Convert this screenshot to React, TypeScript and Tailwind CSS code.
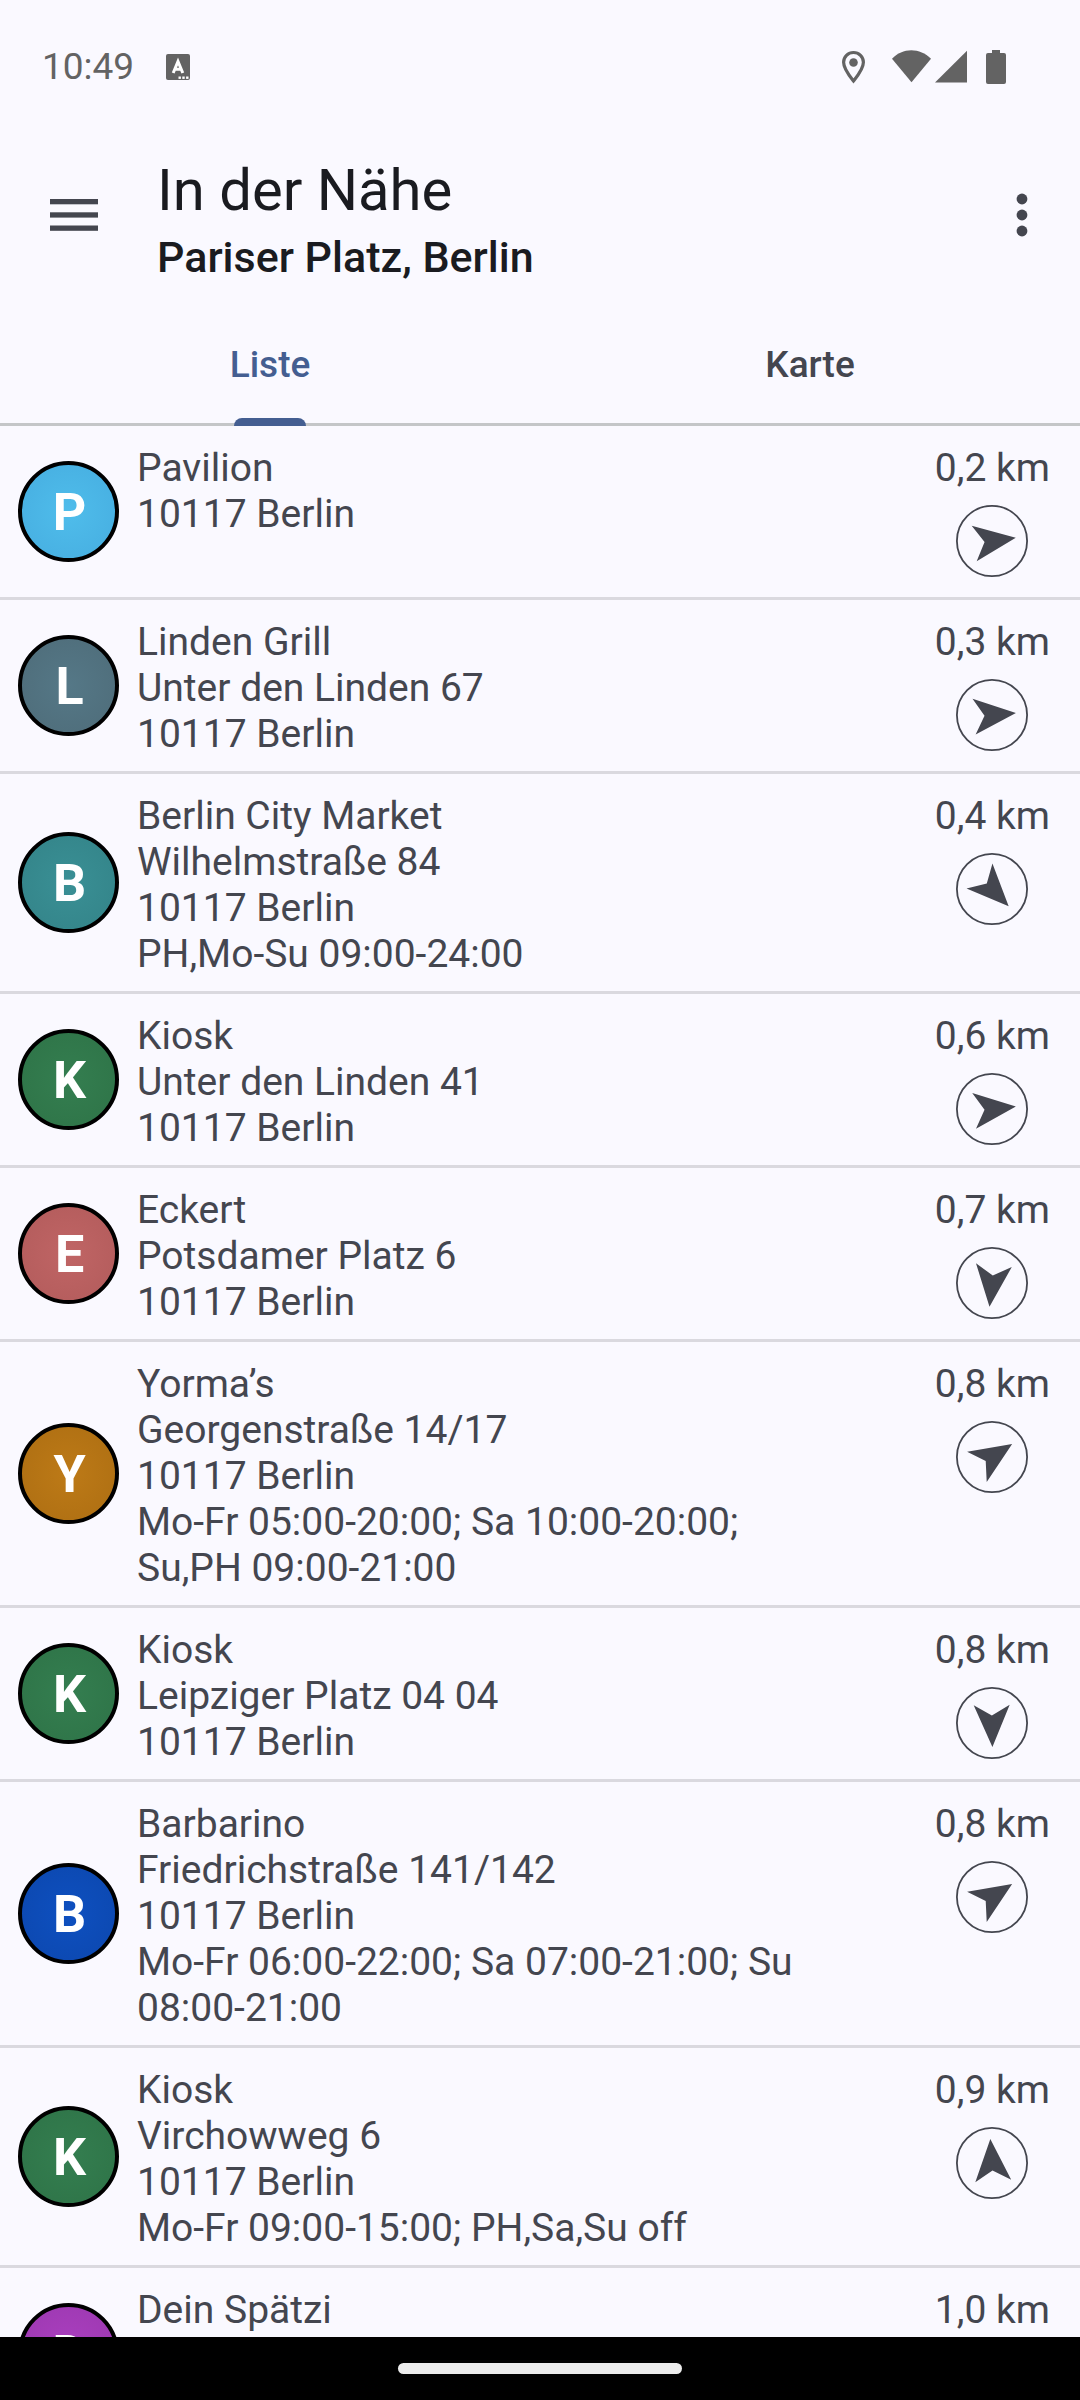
type Place = {
  lines: string[];
  distance: string;
  bearing: number;
  color: string;
};

const places: Place[] = [
  { lines: ["Pavilion", "10117 Berlin"], distance: "0,2 km", bearing: 82, color: "from-[#4fbdeb] to-[#46ade0]" },
  { lines: ["Linden Grill", "Unter den Linden 67", "10117 Berlin"], distance: "0,3 km", bearing: 85, color: "from-[#557887] to-[#4e6c79]" },
  { lines: ["Berlin City Market", "Wilhelmstraße 84", "10117 Berlin", "PH,Mo-Su 09:00-24:00"], distance: "0,4 km", bearing: 136, color: "from-[#3a9095] to-[#338388]" },
  { lines: ["Kiosk", "Unter den Linden 41", "10117 Berlin"], distance: "0,6 km", bearing: 84, color: "from-[#347e50] to-[#2e7347]" },
  { lines: ["Eckert", "Potsdamer Platz 6", "10117 Berlin"], distance: "0,7 km", bearing: 186, color: "from-[#c06565] to-[#b25b5b]" },
  { lines: ["Yorma’s", "Georgenstraße 14/17", "10117 Berlin", "Mo-Fr 05:00-20:00; Sa 10:00-20:00; Su,PH 09:00-21:00"], distance: "0,8 km", bearing: 57, color: "from-[#bd7a17] to-[#ad6e12]" },
  { lines: ["Kiosk", "Leipziger Platz 04 04", "10117 Berlin"], distance: "0,8 km", bearing: 179, color: "from-[#347e50] to-[#2e7347]" },
  { lines: ["Barbarino", "Friedrichstraße 141/142", "10117 Berlin", "Mo-Fr 06:00-22:00; Sa 07:00-21:00; Su 08:00-21:00"], distance: "0,8 km", bearing: 57, color: "from-[#0e50c0] to-[#0c47ae]" },
  { lines: ["Kiosk", "Virchowweg 6", "10117 Berlin", "Mo-Fr 09:00-15:00; PH,Sa,Su off"], distance: "0,9 km", bearing: -4, color: "from-[#347e50] to-[#2e7347]" },
  { lines: ["Dein Spätzi"], distance: "1,0 km", bearing: 0, color: "from-[#ab40c0] to-[#9c38b0]" },
];

function StatusBar() {
  return (
    <div className="flex h-[134px] items-center justify-between pl-[42px] pr-[74px] text-[#636363]">
      <div className="flex items-center gap-8">
        <span className="text-[37px] leading-[46px]">10:49</span>
        <svg width="24" height="26" viewBox="0 0 24 26" fill="currentColor">
          <rect width="24" height="26" rx="2" />
          <path d="M7.2 19 L12 7.5 L16.8 19 M9 15.2 H15" fill="none" stroke="#fff" strokeWidth="3" />
          <rect x="12.5" y="22.5" width="2.4" height="2.4" fill="#fff" />
          <rect x="16.3" y="22.5" width="2.4" height="2.4" fill="#fff" />
          <rect x="20.1" y="22.5" width="2.4" height="2.4" fill="#fff" />
        </svg>
      </div>

      <svg width="164" height="34" viewBox="0 0 164 34" fill="currentColor">
        {/* location */}
        <path d="M11.5 2.5 C6 2.5 1.6 6.8 1.6 12.3 C1.6 19 7.5 26 11.5 31 C15.5 26 21.4 19 21.4 12.3 C21.4 6.8 17 2.5 11.5 2.5 Z" fill="none" stroke="currentColor" strokeWidth="3.2" />
        <circle cx="11.5" cy="12.5" r="4.3" />
        {/* wifi */}
        <path d="M50 8.8 C55.5 3 62 0.2 69.3 0.2 C76.6 0.2 83.3 3 89 8.8 L69.5 32.3 Z" />
        {/* signal */}
        <path d="M93 32.5 L125 0.8 V32.5 Z" />
        {/* battery */}
        <path d="M150 0 h8 v3 h4 a2 2 0 0 1 2 2 v27 a2 2 0 0 1 -2 2 h-16 a2 2 0 0 1 -2 -2 v-27 a2 2 0 0 1 2 -2 h4 Z" />
      </svg>
    </div>
  );
}

function AppBar() {
  return (
    <header className="flex items-center pb-[26px] pl-[42px] pr-[26px] pt-4">
      <button aria-label="Menü" className="flex size-16 items-center justify-center text-[#44464f]">
        <svg width="48" height="32" viewBox="0 0 48 32" fill="currentColor">
          <rect y="0" width="48" height="5.3" />
          <rect y="13.3" width="48" height="5.3" />
          <rect y="26.5" width="48" height="5.3" />
        </svg>
      </button>
      <div className="ml-[51px] flex-1 text-[#1a1b20]">
        <h1 className="text-[58px] leading-[80px]">In der Nähe</h1>
        <p className="mt-1 text-[43px] font-medium leading-[46px]">Pariser Platz, Berlin</p>
      </div>
      <button aria-label="Weitere Optionen" className="flex size-16 items-center justify-center text-[#44464f]">
        <svg width="12" height="44" viewBox="0 0 12 44" fill="currentColor">
          <circle cx="6" cy="6" r="5.4" />
          <circle cx="6" cy="22" r="5.4" />
          <circle cx="6" cy="38" r="5.4" />
        </svg>
      </button>
    </header>
  );
}

function Tabs() {
  return (
    <div role="tablist" className="flex h-[120px] border-b-3 border-[#c4c6c8] text-[37px] font-medium leading-[46px]">
      <button role="tab" aria-selected="true" className="relative flex-1 text-[#445e91]">
        Liste
        <span className="absolute -bottom-[3px] left-1/2 h-2 w-[72px] -translate-x-1/2 rounded-t-lg bg-[#445e91]" />
      </button>
      <button role="tab" aria-selected="false" className="flex-1 text-[#44464f]">
        Karte
      </button>
    </div>
  );
}

function DirectionArrow({ bearing }: { bearing: number }) {
  return (
    <svg width="72" height="72" viewBox="-36 -36 72 72">
      <circle r="35.1" fill="none" stroke="#44464f" strokeWidth="1.8" />
      <path d="M0 -24 L18 18 L0 7.5 L-18 18 Z" fill="#44464f" transform={`rotate(${bearing})`} />
    </svg>
  );
}

function PlaceRow({ place }: { place: Place }) {
  return (
    <li className="flex items-stretch border-b-3 border-[#dad9df] pl-[18px] pr-[30px]">
      <div
        className={`flex size-[101px] shrink-0 items-center justify-center self-center rounded-full border-4 border-black bg-radial pl-0.5 pt-0.5 text-[52px] font-bold leading-none text-white ${place.color}`}
      >
        {place.lines[0][0]}
      </div>
      <div className="ml-[18px] flex-1 pb-[14px] pt-[19px]">
        {place.lines.map((line) => (
          <p key={line}>{line}</p>
        ))}
      </div>
      <div className="ml-[100px] flex shrink-0 flex-col items-center gap-[14px] pb-5 pt-[19px]">
        <span>{place.distance}</span>
        <DirectionArrow bearing={place.bearing} />
      </div>
    </li>
  );
}

export default function App() {
  return (
    <div className="flex h-screen flex-col overflow-hidden bg-[#faf9ff] font-['Roboto',sans-serif]">
      <StatusBar />
      <AppBar />
      <Tabs />

      <ul className="min-h-0 flex-1 overflow-y-auto text-[39px] leading-[46px] text-[#44464f] [scrollbar-width:none]">
        {places.map((place, i) => (
          <PlaceRow key={i} place={place} />
        ))}
      </ul>

      {/* gesture bar */}
      <div className="flex h-[63px] shrink-0 items-center justify-center bg-black">
        <div className="h-[11px] w-[284px] rounded-full bg-[#ececec]" />
      </div>
    </div>
  );
}
